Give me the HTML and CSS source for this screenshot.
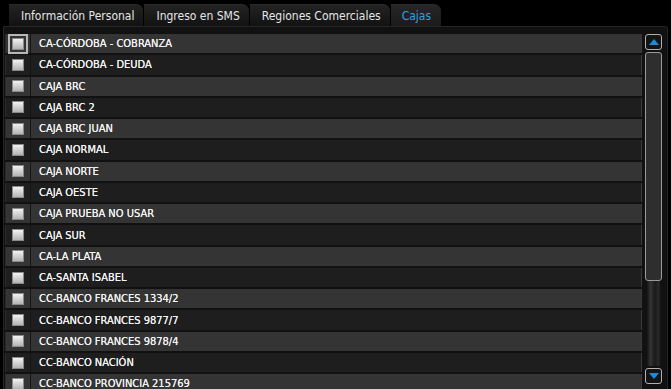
FILE: index.html
```html
<!DOCTYPE html>
<html lang="es">
<head>
  <meta charset="UTF-8">
  <title>Cajas</title>
  <link rel="stylesheet" href="styles.css">
</head>
<body>

  <!-- Pestañas -->
  <div class="tabs">
    <div class="tab">Información Personal</div>
    <div class="tab">Ingreso en SMS</div>
    <div class="tab">Regiones Comerciales</div>
    <div class="tab active">Cajas</div>
  </div>

  <!-- Lista de cajas -->
  <div class="panel">
    <div class="list">
      <div class="row odd"><div class="check focus"><span class="box"></span></div><div class="label">CA-CÓRDOBA - COBRANZA</div></div>
      <div class="row"><div class="check"><span class="box"></span></div><div class="label">CA-CÓRDOBA - DEUDA</div></div>
      <div class="row odd"><div class="check"><span class="box"></span></div><div class="label">CAJA BRC</div></div>
      <div class="row"><div class="check"><span class="box"></span></div><div class="label">CAJA BRC 2</div></div>
      <div class="row odd"><div class="check"><span class="box"></span></div><div class="label">CAJA BRC JUAN</div></div>
      <div class="row"><div class="check"><span class="box"></span></div><div class="label">CAJA NORMAL</div></div>
      <div class="row odd"><div class="check"><span class="box"></span></div><div class="label">CAJA NORTE</div></div>
      <div class="row"><div class="check"><span class="box"></span></div><div class="label">CAJA OESTE</div></div>
      <div class="row odd"><div class="check"><span class="box"></span></div><div class="label">CAJA PRUEBA NO USAR</div></div>
      <div class="row"><div class="check"><span class="box"></span></div><div class="label">CAJA SUR</div></div>
      <div class="row odd"><div class="check"><span class="box"></span></div><div class="label">CA-LA PLATA</div></div>
      <div class="row"><div class="check"><span class="box"></span></div><div class="label">CA-SANTA ISABEL</div></div>
      <div class="row odd"><div class="check"><span class="box"></span></div><div class="label">CC-BANCO FRANCES 1334/2</div></div>
      <div class="row"><div class="check"><span class="box"></span></div><div class="label">CC-BANCO FRANCES 9877/7</div></div>
      <div class="row odd"><div class="check"><span class="box"></span></div><div class="label">CC-BANCO FRANCES 9878/4</div></div>
      <div class="row"><div class="check"><span class="box"></span></div><div class="label">CC-BANCO NACIÓN</div></div>
      <div class="row odd"><div class="check"><span class="box"></span></div><div class="label">CC-BANCO PROVINCIA 215769</div></div>
    </div>

    <div class="scrollbar">
      <div class="arrow">
        <svg width="10" height="6" viewBox="0 0 10 6"><polygon points="5,0 10,6 0,6" fill="#1e8ad6"/></svg>
      </div>
      <div class="thumb"></div>
      <div class="track"></div>
      <div class="arrow">
        <svg width="10" height="6" viewBox="0 0 10 6"><polygon points="0,0 10,0 5,6" fill="#1e8ad6"/></svg>
      </div>
    </div>
  </div>

</body>
</html>
```

FILE: styles.css
```css
* { margin: 0; padding: 0; box-sizing: border-box; }
body {
  background: #000;
  font-family: 'DejaVu Sans Condensed', 'DejaVu Sans', sans-serif;
  overflow: hidden;
  height: 389px;
}
/* Pestañas */
.tabs {
  display: flex;
  padding: 4px 0 0 9px;
  height: 26px;
}
.tab {
  height: 22px;
  line-height: 22px;
  padding: 0 9px 0 12px;
  font-size: 12px;
  color: #e6e6e6;
  background: linear-gradient(#232323, #121212);
  border-left: 1px solid #000;
  border-top: 1px solid #2a2a2a;
  border-radius: 0 7px 0 0;
}
.tab:first-child { border-left: none; }
.tab.active {
  color: #2aa4e0;
  background: linear-gradient(#262626, #1b1b1b);
  padding: 0 10px 0 11px;
}
/* Panel */
.panel {
  margin: 0 3px;
  height: 370px;
  border: 1px solid #262626;
  border-radius: 0 3px 0 0;
  background: #111;
  display: flex;
  padding: 7px 5px 0 1px;
}
.list {
  flex: 1;
  overflow: hidden;
}
.row {
  display: flex;
  align-items: center;
  height: 19.27px;
  margin-bottom: 2px;
  background: #1e1e1e;
  border-right: 1px solid #3a3a3a;
  border-left: 1px solid #2b2b2b;
}
.row.odd { background: #343434; }
.check {
  width: 25px;
  height: 100%;
  display: flex;
  align-items: center;
  justify-content: center;
  border-right: 1px solid #151515;
}
.check.focus .box {
  outline: 2px solid #b8b8b8;
  outline-offset: 2px;
}
.box {
  width: 12px;
  height: 12px;
  background: linear-gradient(#f2f2f2, #b4b4b4);
  border: 1px solid #8a8a8a;
}
.label {
  padding-left: 8px;
  font-size: 11px;
  color: #f2f2f2;
  white-space: nowrap;
  text-shadow: 0 0 0.4px #fff;
}
/* Barra de desplazamiento */
.scrollbar {
  width: 17px;
  margin-left: 3px;
  display: flex;
  flex-direction: column;
  height: 350px;
}
.arrow {
  height: 16px;
  border: 1px solid #b0b0b0;
  border-radius: 3px;
  background: #141414;
  display: flex;
  align-items: center;
  justify-content: center;
}
.thumb {
  height: 229px;
  margin-top: 2px;
  border: 1px solid #9a9a9a;
  border-radius: 3px;
  background: #2e2e2e;
}
.track {
  flex: 1;
  margin: 0 1px 2px;
  background: linear-gradient(90deg, #0c0c0c, #333 30%, #1a1a1a 60%, #2a2a2a 85%, #0c0c0c);
}
```
